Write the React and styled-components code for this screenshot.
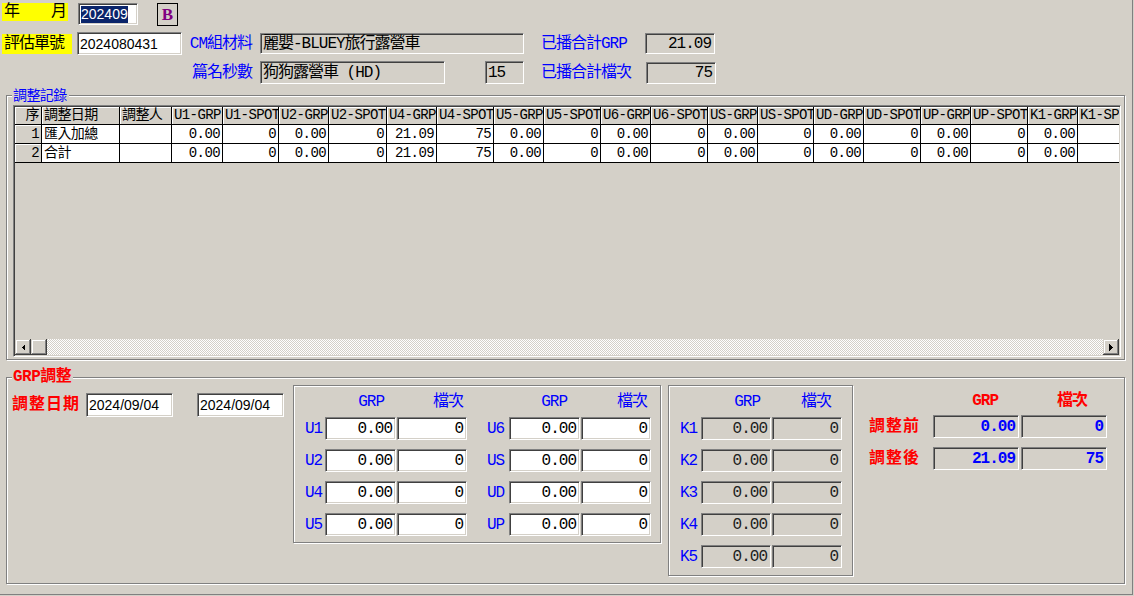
import React from 'react';
import styled, { createGlobalStyle, css } from 'styled-components';

const BG = '#d4d0c8';
const MING = '"Liberation Mono", "Noto Sans CJK TC", monospace';
const SANS = '"Liberation Sans", Arial, sans-serif';
const BLUE = '#0000ff';
const RED = '#ff0000';

const GlobalStyle = createGlobalStyle`
  * { box-sizing: border-box; }
  html, body { margin: 0; padding: 0; background: ${BG}; }
  body { font-family: ${MING}; color: #000; }
`;

const sunken = css`
  border: 1px solid;
  border-color: #808080 #fff #fff #808080;
  box-shadow: inset 1px 1px 0 #404040, inset -1px -1px 0 ${BG};
`;

const etched = css`
  border: 1px solid #808080;
  box-shadow: inset 1px 1px 0 #fff, 1px 1px 0 #fff;
`;

const raised = css`
  box-shadow: inset -1px -1px 0 #404040, inset 1px 1px 0 ${BG},
    inset -2px -2px 0 #808080, inset 2px 2px 0 #fff;
`;

const Window = styled.div`
  width: 1133px;
  height: 595px;
  border-right: 1px solid #808080;
  border-bottom: 1px solid #808080;
  overflow: hidden;
  background: ${BG};
`;

/* ---------- header ---------- */

const TopRow = styled.div`
  display: flex;
  align-items: ${(p) => p.$align || 'center'};
  height: ${(p) => p.$h}px;
  margin-top: ${(p) => p.$mt}px;
  padding-left: 2px;
`;

const YellowTag = styled.div`
  flex: none;
  width: ${(p) => p.$w}px;
  height: ${(p) => p.$h}px;
  background: #ffff00;
  display: flex;
  align-items: center;
  justify-content: space-between;
  padding: 0 2px;
  font-size: 16px;
  line-height: 16px;
  letter-spacing: -1px;
  white-space: nowrap;
`;

const FieldLabel = styled.div`
  flex: none;
  width: ${(p) => p.$w}px;
  margin-left: ${(p) => p.$ml || 0}px;
  padding-right: ${(p) => p.$pr || 0}px;
  text-align: ${(p) => (p.$right ? 'right' : 'left')};
  color: ${BLUE};
  font-size: 16px;
  line-height: 16px;
  letter-spacing: -1px;
  white-space: nowrap;
`;

const Field = styled.div`
  ${sunken};
  flex: none;
  width: ${(p) => p.$w}px;
  height: ${(p) => p.$h || 23}px;
  margin-left: ${(p) => p.$ml || 0}px;
  background: ${(p) => (p.$readOnly ? BG : '#fff')};
  display: flex;
  align-items: center;
  justify-content: ${(p) => (p.$right ? 'flex-end' : 'flex-start')};
  padding: 0 3px 0 2px;
  font-family: ${MING};
  font-size: 16px;
  line-height: 16px;
  letter-spacing: -1px;
  color: ${(p) => p.$color || '#000'};
  font-weight: ${(p) => (p.$bold ? 700 : 400)};
  white-space: nowrap;
  overflow: hidden;
`;

const SansField = styled(Field)`
  font-family: ${SANS};
  font-size: 14px;
  letter-spacing: 0;
`;

const Selected = styled.span`
  background: #0a246a;
  color: #fff;
  line-height: 17px;
`;

const BButton = styled.div`
  flex: none;
  width: 21px;
  height: 23px;
  margin-left: 19px;
  border: 1px solid #000;
  display: flex;
  align-items: center;
  justify-content: center;
  font-family: "Liberation Serif", serif;
  font-weight: 700;
  font-size: 17px;
  color: #800080;
`;

/* ---------- group boxes ---------- */

const GroupBox = styled.div`
  ${etched};
  width: 1119px;
  margin: ${(p) => p.$mt}px 0 0 6px;
  padding-bottom: ${(p) => p.$pb}px;
`;

const Legend = styled.div`
  width: fit-content;
  margin: ${(p) => (p.$bold ? -9 : -8)}px 0 0 5px;
  padding: 0 2px 0 1px;
  background: ${BG};
  color: ${(p) => (p.$bold ? RED : BLUE)};
  font-weight: ${(p) => (p.$bold ? 700 : 400)};
  font-size: ${(p) => (p.$bold ? 16 : 14)}px;
  line-height: 16px;
  letter-spacing: ${(p) => (p.$bold ? -0.5 : -0.6)}px;
`;

/* ---------- grid ---------- */

const GridFrame = styled.div`
  ${sunken};
  width: 1108px;
  height: 252px;
  margin: 1px 0 0 6px;
  padding: 1px;
  display: flex;
  flex-direction: column;
  background: ${BG};
`;

const GridBody = styled.div`
  flex: 1;
  overflow: hidden;
`;

const GridRow = styled.div`
  display: flex;
  width: max-content;
  height: ${(p) => p.$h}px;
`;

const Cell = styled.div`
  flex: none;
  width: ${(p) => p.$w}px;
  height: 100%;
  border-right: 1px solid #000;
  border-bottom: 1px solid #000;
  background: ${(p) => (p.$fixed ? BG : '#fff')};
  box-shadow: ${(p) => (p.$fixed ? 'inset 1px 1px 0 #fff' : 'none')};
  text-align: ${(p) => (p.$right ? 'right' : 'left')};
  padding: 0 2px 0 2px;
  font-size: 14px;
  line-height: ${(p) => p.$lh}px;
  letter-spacing: -0.6px;
  white-space: nowrap;
  overflow: hidden;
`;

const HScroll = styled.div`
  flex: none;
  height: 16px;
  display: flex;
  background: repeating-conic-gradient(#fff 0 25%, ${BG} 0 50%) 0 0 / 2px 2px;
`;

const ScrollButton = styled.div`
  flex: none;
  width: 16px;
  height: 16px;
  background: ${BG};
  ${raised};
  display: flex;
  align-items: center;
  justify-content: center;
`;

const ScrollTrack = styled.div`
  flex: 1;
`;

/* ---------- adjust area ---------- */

const AdjustRow = styled.div`
  display: flex;
  align-items: flex-start;
  padding-left: 5px;
`;

const DateArea = styled.div`
  flex: none;
  display: flex;
  align-items: center;
  width: 281px;
  height: 24px;
  margin-top: 8px;
`;

const RedLabel = styled.div`
  flex: none;
  width: ${(p) => p.$w || 'auto'}px;
  color: ${RED};
  font-weight: 700;
  font-size: 16px;
  line-height: 16px;
  letter-spacing: 1px;
  white-space: nowrap;
  align-self: center;
`;

const PanelBox = styled.div`
  ${(p) => (p.$plain ? '' : etched)};
  flex: none;
  width: ${(p) => p.$w}px;
  height: ${(p) => p.$h}px;
  margin-left: ${(p) => p.$ml || 0}px;
  padding-left: ${(p) => (p.$plain ? 0 : 11)}px;
  display: grid;
  grid-template-columns: ${(p) => p.$cols};
  grid-template-rows: ${(p) => p.$head}px;
  grid-auto-rows: 23px;
  row-gap: 9px;
  align-content: start;
`;

const ColHead = styled.div`
  padding-top: 8px;
  padding-right: ${(p) => p.$pr}px;
  text-align: right;
  color: ${(p) => (p.$red ? RED : BLUE)};
  font-weight: ${(p) => (p.$red ? 700 : 400)};
  font-size: 16px;
  line-height: 16px;
  letter-spacing: -1px;
  white-space: nowrap;
`;

const RowLabel = styled.div`
  align-self: center;
  color: ${BLUE};
  font-size: 16px;
  line-height: 16px;
  letter-spacing: -1px;
`;

const Arrow = ({ dir }) => (
  <svg width="4" height="7" viewBox="0 0 4 7" shapeRendering="crispEdges">
    {dir === 'left' ? (
      <polygon points="4,0 4,7 0.5,3.5" fill="#000" />
    ) : (
      <polygon points="0,0 0,7 3.5,3.5" fill="#000" />
    )}
  </svg>
);

const spotCols = [
  ['U1', 51, 56],
  ['U2', 50, 58],
  ['U4', 50, 57],
  ['U5', 50, 57],
  ['U6', 50, 57],
  ['US', 50, 56],
  ['UD', 50, 57],
  ['UP', 50, 57],
  ['K1', 50, 57],
];

const columns = [
  { h: '序', w: 27, right: true },
  { h: '調整日期', w: 78 },
  { h: '調整人', w: 52 },
  ...spotCols.flatMap(([k, gw, sw]) => [
    { h: `${k}-GRP`, w: gw, right: true },
    { h: `${k}-SPOT`, w: sw, right: true },
  ]),
];

// the K1-SPOT value sits past the grid's visible edge, so it stays blank here
const spotValues = (u4grp, u4spot) =>
  spotCols.flatMap(([k]) => {
    if (k === 'U4') return [u4grp, u4spot];
    if (k === 'K1') return ['0.00', ''];
    return ['0.00', '0'];
  });

const rows = [
  ['1', '匯入加總', '', ...spotValues('21.09', '75')],
  ['2', '合計', '', ...spotValues('21.09', '75')],
];

const midRows = [
  ['U1', 'U6'],
  ['U2', 'US'],
  ['U4', 'UD'],
  ['U5', 'UP'],
];

const App = () => (
  <>
    <GlobalStyle />
    <Window>
      <TopRow $mt={3} $h={22} $align="flex-start">
        <YellowTag $w={66} $h={18}>
          <span>年</span>
          <span>月</span>
        </YellowTag>
        <SansField $w={60} $h={22} $ml={10}>
          <Selected>202409</Selected>
        </SansField>
        <BButton>B</BButton>
      </TopRow>

      <TopRow $mt={7} $h={23}>
        <YellowTag $w={70} $h={20}>評估單號</YellowTag>
        <SansField $w={105} $h={23} $ml={5}>2024080431</SansField>
        <FieldLabel $w={78} $pr={8} $right>CM組材料</FieldLabel>
        <Field $w={264} $h={21} $readOnly>麗嬰-BLUEY旅行露營車</Field>
        <FieldLabel $w={104} $ml={17}>已播合計GRP</FieldLabel>
        <Field $w={70} $h={21} $readOnly $right>21.09</Field>
      </TopRow>

      <TopRow $mt={6} $h={23}>
        <FieldLabel $w={78} $ml={180} $pr={8} $right>篇名秒數</FieldLabel>
        <Field $w={185} $h={23} $readOnly>狗狗露營車 (HD)</Field>
        <Field $w={39} $h={23} $ml={40} $readOnly>15</Field>
        <FieldLabel $w={105} $ml={17}>已播合計檔次</FieldLabel>
        <Field $w={70} $h={22} $readOnly $right>75</Field>
      </TopRow>

      <GroupBox $mt={11} $pb={2}>
        <Legend>調整記錄</Legend>
        <GridFrame>
          <GridBody>
            <GridRow $h={18}>
              {columns.map((c) => (
                <Cell key={c.h} $w={c.w} $lh={17} $fixed $right={c.h === '序'}>
                  {c.h}
                </Cell>
              ))}
            </GridRow>
            {rows.map((r) => (
              <GridRow key={r[0]} $h={19}>
                {r.map((v, i) => (
                  <Cell
                    key={columns[i].h}
                    $w={columns[i].w}
                    $lh={18}
                    $fixed={i === 0}
                    $right={columns[i].right}
                  >
                    {v}
                  </Cell>
                ))}
              </GridRow>
            ))}
          </GridBody>
          <HScroll>
            <ScrollButton>
              <Arrow dir="left" />
            </ScrollButton>
            <ScrollButton />
            <ScrollTrack />
            <ScrollButton>
              <Arrow dir="right" />
            </ScrollButton>
          </HScroll>
        </GridFrame>
      </GroupBox>

      <GroupBox $mt={17} $pb={7}>
        <Legend $bold>GRP調整</Legend>
        <AdjustRow>
          <DateArea>
            <RedLabel $w={74}>調整日期</RedLabel>
            <SansField $w={87} $h={24}>2024/09/04</SansField>
            <SansField $w={87} $h={24} $ml={24}>2024/09/04</SansField>
          </DateArea>

          <PanelBox $w={368} $h={158} $head={22} $cols="20px 72px 70px 20px 22px 72px 70px">
            <span />
            <ColHead $pr={13}>GRP</ColHead>
            <ColHead $pr={4}>檔次</ColHead>
            <span />
            <span />
            <ColHead $pr={14}>GRP</ColHead>
            <ColHead $pr={4}>檔次</ColHead>
            {midRows.map(([a, b]) => (
              <React.Fragment key={a}>
                <RowLabel>{a}</RowLabel>
                <Field $w={71} $right>0.00</Field>
                <Field $w={70} $right>0</Field>
                <span />
                <RowLabel>{b}</RowLabel>
                <Field $w={71} $right>0.00</Field>
                <Field $w={70} $right>0</Field>
              </React.Fragment>
            ))}
          </PanelBox>

          <PanelBox $w={185} $h={191} $ml={7} $head={22} $cols="21px 71px 70px">
            <span />
            <ColHead $pr={12}>GRP</ColHead>
            <ColHead $pr={11}>檔次</ColHead>
            {['K1', 'K2', 'K3', 'K4', 'K5'].map((k) => (
              <React.Fragment key={k}>
                <RowLabel>{k}</RowLabel>
                <Field $w={70} $readOnly $right $color="#202020">0.00</Field>
                <Field $w={70} $readOnly $right $color="#202020">0</Field>
              </React.Fragment>
            ))}
          </PanelBox>

          <PanelBox $plain $w={238} $h={90} $ml={16} $head={21} $cols="64px 88px 86px">
            <span />
            <ColHead $red $pr={23}>GRP</ColHead>
            <ColHead $red $pr={20}>檔次</ColHead>
            <RedLabel>調整前</RedLabel>
            <Field $w={86} $readOnly $right $bold $color={BLUE}>0.00</Field>
            <Field $w={86} $readOnly $right $bold $color={BLUE}>0</Field>
            <RedLabel>調整後</RedLabel>
            <Field $w={86} $readOnly $right $bold $color={BLUE}>21.09</Field>
            <Field $w={86} $readOnly $right $bold $color={BLUE}>75</Field>
          </PanelBox>
        </AdjustRow>
      </GroupBox>
    </Window>
  </>
);

export default App;
